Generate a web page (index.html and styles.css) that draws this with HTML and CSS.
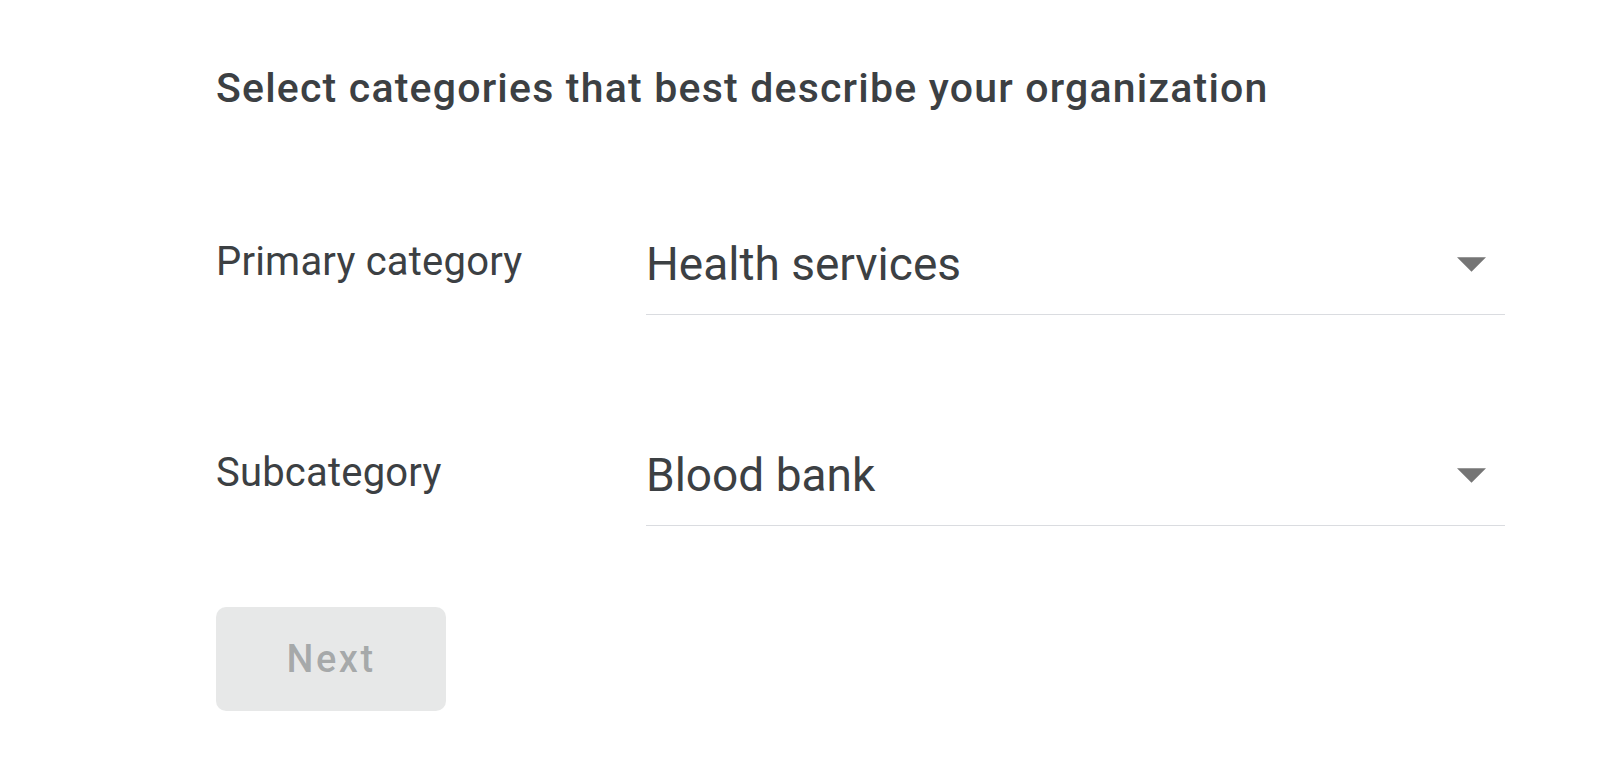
FILE: index.html
```html
<!DOCTYPE html>
<html lang="en">
<head>
  <meta charset="UTF-8">
  <meta name="viewport" content="width=device-width, initial-scale=1.0">
  <title>Business category</title>
  <link rel="stylesheet" href="styles.css">
</head>
<body>
  <div class="container">
    <h1 class="title">Select categories that best describe your organization</h1>

    <div class="field">
      <label class="field-label">Primary category</label>
      <div class="select">
        <span class="select-value">Health services</span>
        <svg class="arrow" viewBox="0 0 10 5" width="29" height="15"><path d="M0 0l5 5 5-5z"/></svg>
      </div>
    </div>

    <div class="field field-sub">
      <label class="field-label">Subcategory</label>
      <div class="select">
        <span class="select-value">Blood bank</span>
        <svg class="arrow" viewBox="0 0 10 5" width="29" height="15"><path d="M0 0l5 5 5-5z"/></svg>
      </div>
    </div>

    <button class="btn" disabled>Next</button>
  </div>
</body>
</html>
```

FILE: styles.css
```css
body {
  margin: 0;
  background: #fff;
  color: #3c4043;
  font-family: Roboto, "Liberation Sans", sans-serif;
}
.container {
  padding: 64px 0 0 216px;
}
.title {
  margin: 0;
  font-size: 41px;
  line-height: 48px;
  font-weight: 500;
  letter-spacing: 1.2px;
}
.field {
  display: flex;
  align-items: flex-start;
  margin-top: 126px;
}
.field-sub {
  margin-top: 134px;
}
.field-label {
  width: 430px;
  flex: none;
  font-size: 40px;
  line-height: 48px;
  letter-spacing: 0.2px;
}
.select {
  width: 840px;
  display: flex;
  align-items: center;
  justify-content: space-between;
  padding: 0 19px 24px 0;
  border-bottom: 1px solid #dadce0;
}
.select-value {
  font-size: 46px;
  line-height: 52px;
}
.arrow {
  fill: rgba(0, 0, 0, 0.54);
}
.btn {
  display: block;
  margin-top: 81px;
  width: 230px;
  height: 104px;
  border: none;
  border-radius: 10px;
  background: rgba(60, 64, 67, 0.12);
  color: rgba(60, 64, 67, 0.38);
  font-family: Roboto, "Liberation Sans", sans-serif;
  font-size: 38px;
  font-weight: 500;
  letter-spacing: 2.5px;
}
```
